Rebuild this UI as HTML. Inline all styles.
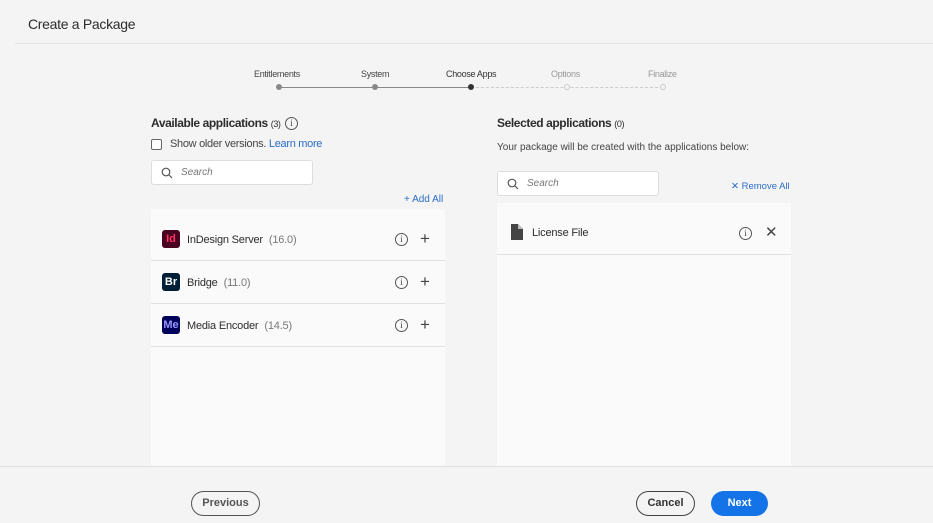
<!DOCTYPE html>
<html><head><meta charset="utf-8"><style>
*{box-sizing:border-box;margin:0;padding:0}
body{width:933px;height:523px;background:#f4f4f4;font-family:"Liberation Sans",sans-serif;color:#2c2c2c;position:relative;overflow:hidden}
.a{position:absolute}
.t{font-size:10px;white-space:nowrap}
.dot{position:absolute;width:6px;height:6px;border-radius:50%}
.panel{position:absolute;background:#fafafa}
.row{position:absolute;left:0;right:0;height:43px;border-bottom:1px solid #e1e1e1}
.ic{position:absolute;left:11px;top:12px;width:18px;height:18px;border-radius:3px;font-weight:bold;font-size:11px;text-align:center;line-height:18px}
.nm{position:absolute;left:36px;top:16px;font-size:11px;letter-spacing:-0.2px}
.nm span{color:#777;margin-left:6px}
.info{position:absolute;width:13px;height:13px;border:1.3px solid #555;border-radius:50%;font-size:9px;text-align:center;line-height:11px;font-family:"Liberation Serif",serif;color:#444}
.plus{position:absolute;font-size:17px;color:#444;line-height:1}
.search{position:absolute;height:25px;background:#fff;border:1px solid #ddd;border-radius:3px}
.search span{position:absolute;left:29px;top:6px;font-size:10px;font-style:italic;color:#777}
.btn{position:absolute;height:25px;border-radius:13px;font-size:11px;font-weight:bold;text-align:center;line-height:23px}
</style></head><body>
<div class="a" style="left:28px;top:16px;font-size:14px;color:#2c2c2c;letter-spacing:-0.3px">Create a Package</div>
<div class="a" style="left:15px;top:43px;width:918px;height:1px;background:#e2e2e2"></div>

<div class="a t" style="left:254px;top:69px;font-size:9px;color:#444;letter-spacing:-0.3px">Entitlements</div>
<div class="a t" style="left:361px;top:69px;font-size:9px;color:#444;letter-spacing:-0.3px">System</div>
<div class="a t" style="left:446px;top:69px;font-size:9px;color:#333;letter-spacing:-0.3px">Choose Apps</div>
<div class="a t" style="left:551px;top:69px;font-size:9px;color:#999;letter-spacing:-0.3px">Options</div>
<div class="a t" style="left:648px;top:69px;font-size:9px;color:#999;letter-spacing:-0.3px">Finalize</div>
<div class="a" style="left:279px;top:87px;width:192px;height:1px;background:#888"></div>
<div class="a" style="left:471px;top:87px;width:192px;border-top:1px dashed #ccc"></div>
<div class="dot" style="left:276px;top:84px;background:#888"></div>
<div class="dot" style="left:372px;top:84px;background:#888"></div>
<div class="dot" style="left:468px;top:84px;background:#333"></div>
<div class="dot" style="left:564px;top:84px;border:1px solid #ccc;background:#f4f4f4"></div>
<div class="dot" style="left:660px;top:84px;border:1px solid #ccc;background:#f4f4f4"></div>

<div class="a" style="left:151px;top:116px;font-size:12px;font-weight:bold;color:#2c2c2c;letter-spacing:-0.4px;white-space:nowrap">Available applications <span style="font-size:9px;font-weight:normal">(3)</span></div>
<div class="info" style="left:285px;top:117px">i</div>
<div class="a" style="left:151px;top:139px;width:11px;height:11px;border:1px solid #666;border-radius:2px;background:#fff"></div>
<div class="a t" style="left:170px;top:138px;font-size:11px;color:#444;letter-spacing:-0.3px">Show older versions. <span style="color:#2b6dc7">Learn more</span></div>
<div class="search" style="left:151px;top:160px;width:162px"><svg class="a" style="left:9px;top:6px" width="12" height="12" viewBox="0 0 12 12"><circle cx="5" cy="5" r="3.8" fill="none" stroke="#555" stroke-width="1.2"/><path d="M8 8l3 3" stroke="#555" stroke-width="1.2"/></svg><span>Search</span></div>
<div class="a t" style="left:404px;top:194px;color:#2b6dc7">+ Add All</div>

<div class="panel" style="left:151px;top:209px;width:294px;height:257px">
 <div class="row" style="top:9px"><div class="ic" style="background:#49021f;color:#ff3366">Id</div><div class="nm">InDesign Server<span>(16.0)</span></div><div class="info" style="left:244px;top:15px">i</div><div class="plus" style="left:269px;top:12px">+</div></div>
 <div class="row" style="top:52px"><div class="ic" style="background:#001e36;color:#fff">Br</div><div class="nm">Bridge<span>(11.0)</span></div><div class="info" style="left:244px;top:15px">i</div><div class="plus" style="left:269px;top:12px">+</div></div>
 <div class="row" style="top:95px"><div class="ic" style="background:#00005b;color:#9999ff">Me</div><div class="nm">Media Encoder<span>(14.5)</span></div><div class="info" style="left:244px;top:15px">i</div><div class="plus" style="left:269px;top:12px">+</div></div>
</div>

<div class="a" style="left:497px;top:116px;font-size:12px;font-weight:bold;letter-spacing:-0.4px;white-space:nowrap">Selected applications <span style="font-size:9px;font-weight:normal">(0)</span></div>
<div class="a t" style="left:497px;top:142px;font-size:10px;color:#444">Your package will be created with the applications below:</div>
<div class="search" style="left:497px;top:171px;width:162px"><svg class="a" style="left:9px;top:6px" width="12" height="12" viewBox="0 0 12 12"><circle cx="5" cy="5" r="3.8" fill="none" stroke="#555" stroke-width="1.2"/><path d="M8 8l3 3" stroke="#555" stroke-width="1.2"/></svg><span>Search</span></div>
<div class="a t" style="left:731px;top:181px;font-size:9.5px;color:#2b6dc7">✕ Remove All</div>

<div class="panel" style="left:497px;top:203px;width:294px;height:263px">
 <div class="row" style="top:8px;height:44px"><svg class="a" style="left:14px;top:13px" width="12" height="16" viewBox="0 0 12 16"><path d="M0 0h7l5 5v11H0z" fill="#444"/><path d="M7 0v5h5" fill="#bbb"/></svg><div class="nm" style="left:35px;top:16px">License File</div><div class="info" style="left:242px;top:16px">i</div><div class="plus" style="left:268px;top:14px;font-size:15px">✕</div></div>
</div>

<div class="a" style="left:0;top:466px;width:933px;height:1px;background:#e0e0e0"></div>
<div class="btn" style="left:191px;top:491px;width:69px;border:1.3px solid #555;color:#555">Previous</div>
<div class="btn" style="left:636px;top:491px;width:59px;border:1.3px solid #444;color:#333">Cancel</div>
<div class="btn" style="left:711px;top:491px;width:57px;background:#1473e6;color:#fff;line-height:25px">Next</div>
</body></html>
